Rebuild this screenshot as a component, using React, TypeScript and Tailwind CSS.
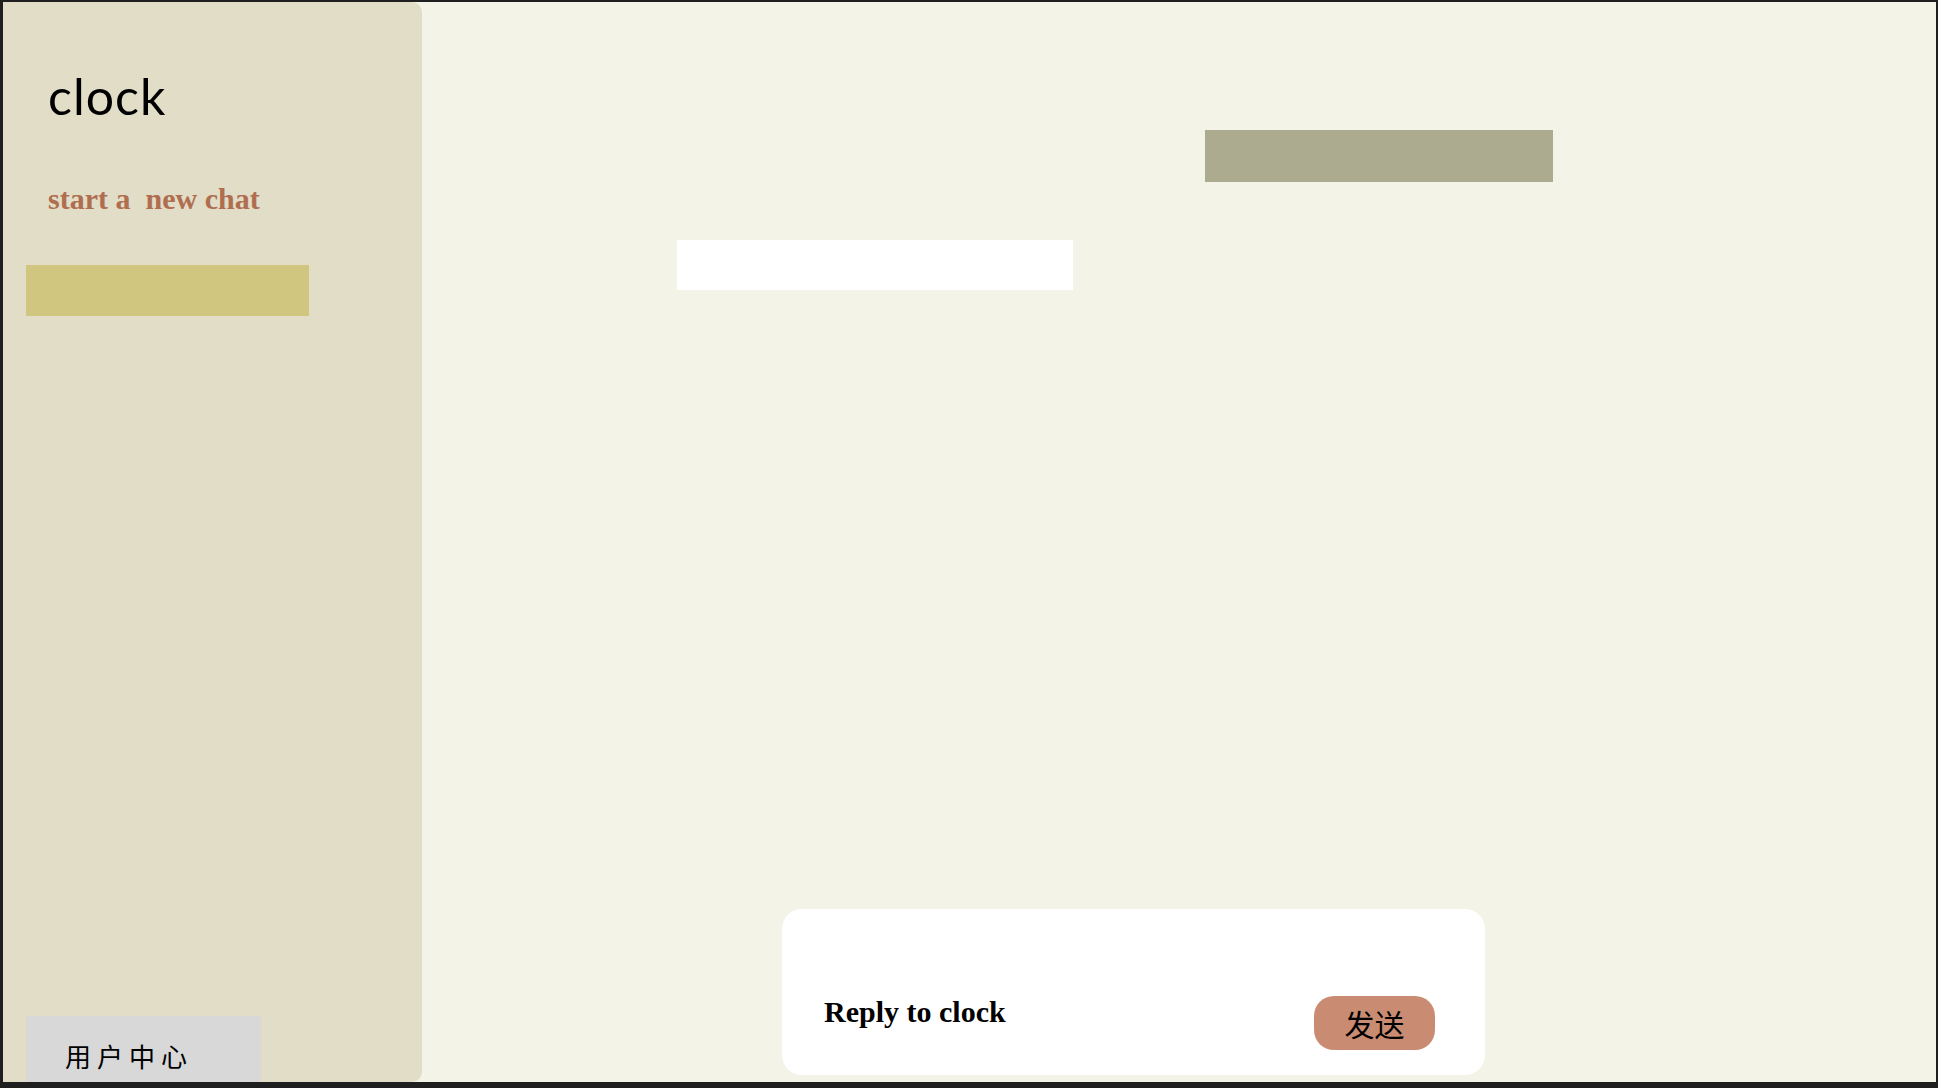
import React from 'react';

const serif = { fontFamily: '"Liberation Serif", "Noto Sans CJK SC", serif' };

export default function App() {
    return (
        <div className="h-[1088px] w-[1938px] bg-[#1f1f1f] pt-[2px] pl-[3px] pr-[2px] pb-[6px] overflow-hidden">
            <div className="flex h-full w-full bg-[#f3f3e7]">
                {/* sidebar */}
                <aside className="flex h-full w-[419px] shrink-0 flex-col rounded-r-[10px] bg-[#e1ddc6]">
                    <div className="pl-[45px] pt-[69px]">
                        <h1
                            className="text-[50px] leading-none text-black"
                            style={{ fontFamily: 'Lato, "Open Sans", sans-serif', letterSpacing: '1px' }}
                        >
                            clock
                        </h1>
                    </div>
                    <div className="pl-[45px] pt-[63px]">
                        <button
                            className="whitespace-pre text-[30px] font-bold leading-none text-[#b06e50]"
                            style={serif}
                        >
                            {'start a  new chat'}
                        </button>
                    </div>
                    <div className="mt-[50px] ml-[23px] h-[51px] w-[283px] bg-[#d0c67f]" />
                    <div className="flex-1" />
                    <div className="ml-[23px] flex h-[66px] w-[235px] items-end bg-[#d8d8d8] pb-[13px] pl-[39px]">
                        <span
                            className="text-[26px] leading-none tracking-[6px] text-black"
                            style={{ fontFamily: '"Noto Sans CJK SC", sans-serif' }}
                        >
                            用户中心
                        </span>
                    </div>
                </aside>

                {/* main */}
                <main className="flex h-full flex-1 flex-col">
                    <div className="flex flex-1 flex-col pt-[128px]">
                        <div className="ml-[783px] h-[52px] w-[348px] bg-[#adab8f]" />
                        <div className="mt-[58px] ml-[255px] h-[50px] w-[396px] bg-white" />
                    </div>
                    <div className="mb-[7px] ml-[360px] flex h-[166px] w-[703px] items-end justify-between rounded-[20px] bg-white pb-[25px] pl-[42px] pr-[50px]">
                        <span className="mb-[23px] text-[30px] font-bold leading-none text-black" style={serif}>
                            Reply to clock
                        </span>
                        <button
                            className="flex h-[54px] w-[121px] items-center justify-center rounded-[20px] bg-[#c98c72] text-[30px] text-black"
                            style={{ fontFamily: '"Noto Sans CJK SC", sans-serif' }}
                        >
                            发送
                        </button>
                    </div>
                </main>
            </div>
        </div>
    );
}
